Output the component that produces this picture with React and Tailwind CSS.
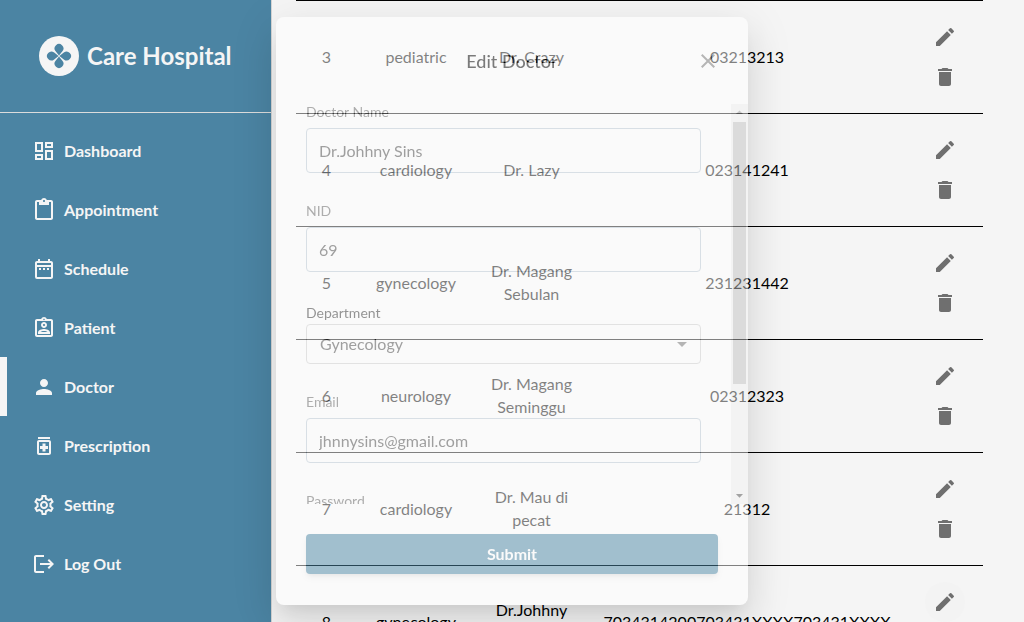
import React from "react";
import {
  MdOutlineDashboard,
  MdContentPaste,
  MdOutlineDateRange,
  MdOutlineAssignmentInd,
  MdPerson,
  MdOutlineMedication,
  MdOutlineSettings,
  MdLogout,
  MdEdit,
  MdDelete,
  MdClose,
  MdArrowDropDown,
  MdArrowDropUp,
} from "react-icons/md";

const navItems = [
  { label: "Dashboard", Icon: MdOutlineDashboard },
  { label: "Appointment", Icon: MdContentPaste },
  { label: "Schedule", Icon: MdOutlineDateRange },
  { label: "Patient", Icon: MdOutlineAssignmentInd },
  { label: "Doctor", Icon: MdPerson, active: true },
  { label: "Prescription", Icon: MdOutlineMedication },
  { label: "Setting", Icon: MdOutlineSettings },
  { label: "Log Out", Icon: MdLogout },
];

const doctors = [
  { no: 3, department: "pediatric", name: "Dr. Crazy", nid: "03213213" },
  { no: 4, department: "cardiology", name: "Dr. Lazy", nid: "023141241" },
  { no: 5, department: "gynecology", name: "Dr. Magang Sebulan", nid: "231231442" },
  { no: 6, department: "neurology", name: "Dr. Magang Seminggu", nid: "02312323" },
  { no: 7, department: "cardiology", name: "Dr. Mau di pecat", nid: "21312" },
  { no: 8, department: "gynecology", name: "Dr.Johhny Sins", nid: "7034314200703431XXXX703431XXXX", focused: true },
];

function Logo() {
  return (
    <svg viewBox="0 0 40 40" className="size-10 shrink-0" aria-hidden="true">
      <circle cx="20" cy="20" r="20" fill="#f5f5f5" />
      {[0, 90, 180, 270].map((angle) => (
        <path
          key={angle}
          transform={`rotate(${angle} 20 20)`}
          d="M20 19.6L16.6 15.2A4.4 4.4 0 1 1 23.4 15.2Z"
          fill="#4b84a3"
        />
      ))}
    </svg>
  );
}

function Sidebar() {
  return (
    <aside className="h-full w-[272px] shrink-0 border-r border-[#d4d4d4] bg-[#4b84a3] text-[#f5f5f5]">
      <div className="flex h-[113px] items-center gap-2 border-b border-[#dcdcdc] pl-[39px]">
        <Logo />
        <span className="text-2xl font-bold">Care Hospital</span>
      </div>
      <nav className="flex flex-col pt-2">
        {navItems.map(({ label, Icon, active }) => (
          <a
            key={label}
            href="#"
            aria-current={active ? "page" : undefined}
            className={
              active
                ? "flex h-[59px] items-center gap-2 border-l-[7px] border-[#f5f5f5] pl-[25px] font-bold"
                : "flex h-[59px] items-center gap-2 pl-8 font-bold"
            }
          >
            <Icon className="size-6" />
            {label}
          </a>
        ))}
      </nav>
    </aside>
  );
}

function DoctorTable() {
  return (
    <table className="w-full table-fixed border-collapse text-center text-base leading-[23px] text-black">
      <colgroup>
        <col className="w-[61px]" />
        <col className="w-[118px]" />
        <col className="w-[113px]" />
        <col />
        <col className="w-[77px]" />
      </colgroup>
      <tbody>
        {doctors.map((d) => (
          <tr key={d.no} className="h-[113px] border-t border-black">
            <td className="pb-0.5">{d.no}</td>
            <td className="pb-0.5">{d.department}</td>
            <td className="px-3 pb-0.5">{d.name}</td>
            <td className="pb-0.5">{d.nid}</td>
            <td>
              <div className="flex flex-col items-center text-[#6f6f6f]">
                <button
                  type="button"
                  aria-label={`Edit ${d.name}`}
                  className={
                    d.focused
                      ? "flex size-10 items-center justify-center rounded-full bg-[#f3f3f3]"
                      : "flex size-10 items-center justify-center rounded-full"
                  }
                >
                  <MdEdit className="size-6" />
                </button>
                <button
                  type="button"
                  aria-label={`Delete ${d.name}`}
                  className="flex size-10 items-center justify-center rounded-full"
                >
                  <MdDelete className="size-6" />
                </button>
              </div>
            </td>
          </tr>
        ))}
      </tbody>
    </table>
  );
}

function TextField({ id, label, type = "text", value }) {
  return (
    <div className="flex flex-col gap-2">
      <label htmlFor={id} className="text-sm leading-4 text-[#666]">
        {label}
      </label>
      <input
        id={id}
        type={type}
        defaultValue={value}
        className="h-[45px] w-full rounded border border-[#bccad6] bg-transparent px-3 text-base text-[#4a4a4a]"
      />
    </div>
  );
}

function EditDialog() {
  return (
    <div className="fixed inset-0 flex items-center justify-center">
      <form
        role="dialog"
        aria-labelledby="dialog-title"
        className="w-full max-w-[472px] rounded-lg bg-white pb-[31px] opacity-50 shadow-[0_11px_15px_-7px_rgba(0,0,0,0.2),0_24px_38px_3px_rgba(0,0,0,0.14),0_9px_46px_8px_rgba(0,0,0,0.12)]"
      >
        <div className="grid h-[87px] grid-cols-[1fr_auto_1fr] items-center px-7">
          <h2 id="dialog-title" className="col-start-2 text-lg font-medium text-black">
            Edit Doctor
          </h2>
          <button type="button" aria-label="Close" className="justify-self-end text-[#777]">
            <MdClose className="size-6" />
          </button>
        </div>
        <div className="flex h-[400px]">
          <div className="flex flex-1 flex-col gap-[30px] overflow-hidden px-[30px]">
            <TextField id="name" label="Doctor Name" value="Dr.Johhny Sins" />
            <TextField id="nid" label="NID" value="69" />
            <div className="flex flex-col">
              <label htmlFor="department" className="text-sm leading-[22px] text-[#333]">
                Department
              </label>
              <div className="grid items-center">
                <select
                  id="department"
                  defaultValue="Gynecology"
                  className="col-start-1 row-start-1 h-10 w-full appearance-none rounded border border-[#d0d0d0] bg-transparent px-[13px] text-base text-[#4a4a4a]"
                >
                  <option>Gynecology</option>
                  <option>Cardiology</option>
                  <option>Neurology</option>
                  <option>Pediatric</option>
                </select>
                <MdArrowDropDown className="pointer-events-none col-start-1 row-start-1 mr-[7px] size-6 justify-self-end text-[#757575]" />
              </div>
            </div>
            <TextField id="email" label="Email" type="email" value="jhnnysins@gmail.com" />
            <TextField id="password" label="Password" type="password" value="" />
          </div>
          <div className="flex w-[17px] flex-col items-center justify-between bg-[#f1f1f1] text-[#505050]">
            <MdArrowDropUp className="size-[17px] text-[#999]" />
            <div className="mt-px mb-auto h-[262px] w-[13px] bg-[#c1c1c1]" />
            <MdArrowDropDown className="size-[17px]" />
          </div>
        </div>
        <div className="px-[30px] pt-[30px]">
          <button
            type="submit"
            className="h-10 w-full rounded bg-[#4f89a7] text-base font-bold text-white shadow-md"
          >
            Submit
          </button>
        </div>
      </form>
    </div>
  );
}

export default function App() {
  return (
    <div className="flex h-screen overflow-hidden bg-[#f5f5f5] font-['Lato',sans-serif]">
      <Sidebar />
      <main className="min-w-0 flex-1 overflow-hidden pr-[41px] pl-6">
        <DoctorTable />
      </main>
      <EditDialog />
    </div>
  );
}
